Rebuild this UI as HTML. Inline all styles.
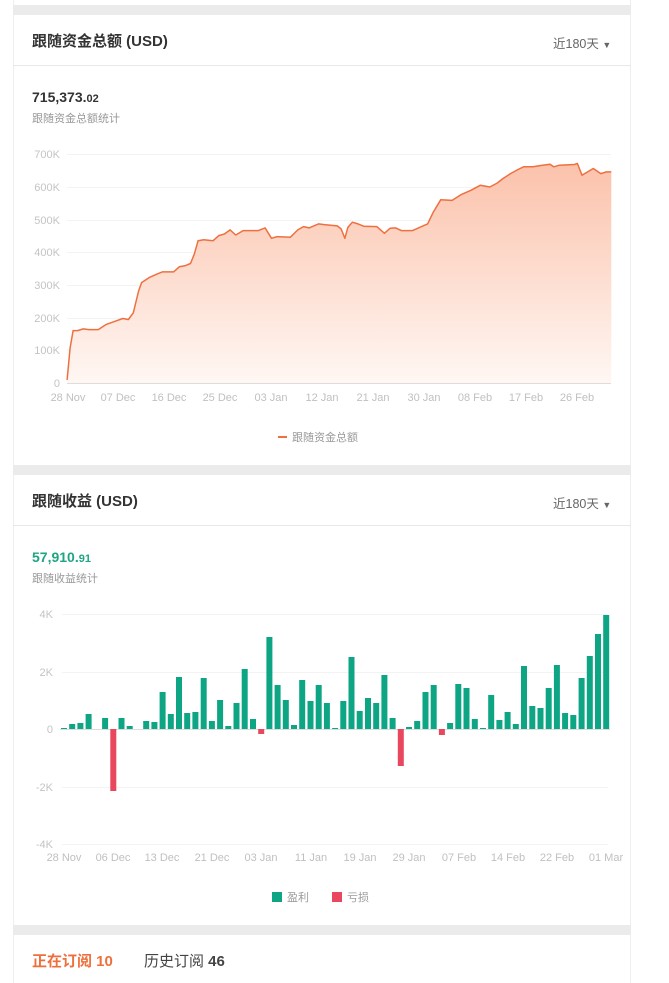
<!DOCTYPE html>
<html><head><meta charset="utf-8"><style>
*{margin:0;padding:0;box-sizing:border-box}
body{width:669px;height:983px;background:#fff;position:relative;overflow:hidden;font-family:"Liberation Sans","Noto Sans CJK SC",sans-serif}
.gap{position:absolute;left:13px;width:618px;background:#ebebeb}
.card{position:absolute;left:13px;width:618px;background:#fff;border-left:1px solid #eee;border-right:1px solid #eee}
.t{position:absolute;white-space:nowrap}
</style></head><body>
<div class="card" style="top:0;height:5px"></div>
<div class="gap" style="top:5px;height:10px"></div>
<div class="card" style="top:15px;height:450px"></div>
<div class="gap" style="top:465px;height:10px"></div>
<div class="card" style="top:475px;height:450px"></div>
<div class="gap" style="top:925px;height:10px"></div>
<div class="card" style="top:935px;height:48px"></div>

<div class="t" style="left:32px;top:30px;font-size:15px;font-weight:bold;color:#333">跟随资金总额 (USD)</div>
<div class="t" style="left:553px;top:33px;font-size:12.5px;color:#666">近180天 <span style="font-size:9px;color:#666">▼</span></div>
<div style="position:absolute;left:13px;top:65px;width:618px;height:1px;background:#e8e8e8"></div>
<div class="t" style="left:32px;top:89px;font-size:14px;font-weight:bold;color:#333">715,373.<span style="font-size:11px">02</span></div>
<div class="t" style="left:32px;top:110px;font-size:11px;color:#999">跟随资金总额统计</div>

<div class="t" style="left:32px;top:490px;font-size:15px;font-weight:bold;color:#333">跟随收益 (USD)</div>
<div class="t" style="left:553px;top:493px;font-size:12.5px;color:#666">近180天 <span style="font-size:9px;color:#666">▼</span></div>
<div style="position:absolute;left:13px;top:525px;width:618px;height:1px;background:#e8e8e8"></div>
<div class="t" style="left:32px;top:549px;font-size:14px;font-weight:bold;color:#1ea584">57,910.<span style="font-size:11px">91</span></div>
<div class="t" style="left:32px;top:570px;font-size:11px;color:#999">跟随收益统计</div>

<div class="t" style="left:32px;top:950px;font-size:15px;font-weight:bold;color:#ef6f3c">正在订阅 10</div>
<div class="t" style="left:144px;top:950px;font-size:15px;color:#444">历史订阅 <b>46</b></div>

<svg style="position:absolute;left:0;top:0" width="669" height="983" font-family="Liberation Sans, sans-serif">
<defs><linearGradient id="g" x1="0" y1="0" x2="0" y2="1"><stop offset="0" stop-color="#fbc2ab"/><stop offset="1" stop-color="#fff7f3"/></linearGradient></defs>
<g stroke="#f3f3f3" stroke-width="1">
<line x1="67" y1="154.5" x2="611" y2="154.5"/><line x1="67" y1="187.5" x2="611" y2="187.5"/><line x1="67" y1="220.5" x2="611" y2="220.5"/><line x1="67" y1="252.5" x2="611" y2="252.5"/><line x1="67" y1="285.5" x2="611" y2="285.5"/><line x1="67" y1="318.5" x2="611" y2="318.5"/><line x1="67" y1="350.5" x2="611" y2="350.5"/>
<line x1="62" y1="614.5" x2="608" y2="614.5"/><line x1="62" y1="672.5" x2="608" y2="672.5"/><line x1="62" y1="787.5" x2="608" y2="787.5"/><line x1="62" y1="844.5" x2="608" y2="844.5"/>
</g>
<g font-size="11" fill="#c4c4c4" text-anchor="end">
<text x="60" y="158">700K</text><text x="60" y="191">600K</text><text x="60" y="224">500K</text><text x="60" y="256">400K</text><text x="60" y="289">300K</text><text x="60" y="322">200K</text><text x="60" y="354">100K</text><text x="60" y="387">0</text>
<text x="53" y="618">4K</text><text x="53" y="676">2K</text><text x="53" y="733">0</text><text x="53" y="791">-2K</text><text x="53" y="848">-4K</text>
</g>
<path d="M67.1,379.9 L70.1,348 L73.1,330.6 L77.6,330.6 L83.3,328.9 L88.9,329.6 L98.3,329.6 L105.9,324.6 L115.3,321.2 L122.8,318.5 L128.4,319.5 L133.3,312.8 L138.6,291 L141.6,282.6 L149.1,277.6 L156.7,274.2 L162.3,271.9 L173.6,271.9 L179.3,266.8 L184.9,265.8 L190.5,263.5 L194.3,254.1 L198.1,240.7 L203.7,239.7 L213.1,240.7 L218.8,235.6 L224.4,234 L230.1,229.9 L235.7,235 L243.2,230.6 L258.3,230.6 L265.1,227.9 L271.5,238.3 L277.1,236.6 L290.3,237.3 L297.8,229.9 L303.5,226.6 L309.1,227.9 L318.5,223.9 L324.2,224.6 L337.3,225.9 L341.1,228.9 L344.9,238.3 L347.9,227.2 L352.4,222.2 L358,223.9 L363.7,226.2 L376.8,226.6 L384.4,233.3 L390,228.3 L395.7,227.9 L401.3,230.6 L412.6,230.6 L420.1,227.2 L427.6,223.9 L433.3,212.1 L440.8,199.7 L452.1,200.4 L461.5,194.4 L470.9,190.3 L480.3,185.3 L489.8,187 L497.3,183 L502.9,178.6 L510.5,173.6 L518,169.5 L523.6,166.8 L533,166.8 L542.4,165.2 L550,164.2 L553.7,166.8 L559.4,165.2 L574.4,164.5 L577.4,163.5 L582,175.2 L587.6,171.9 L593.3,168.5 L600.8,173.6 L606.4,171.9 L611.3,171.9 L611.3,383 L67,383 Z" fill="url(#g)"/>
<path d="M67.1,379.9 L70.1,348 L73.1,330.6 L77.6,330.6 L83.3,328.9 L88.9,329.6 L98.3,329.6 L105.9,324.6 L115.3,321.2 L122.8,318.5 L128.4,319.5 L133.3,312.8 L138.6,291 L141.6,282.6 L149.1,277.6 L156.7,274.2 L162.3,271.9 L173.6,271.9 L179.3,266.8 L184.9,265.8 L190.5,263.5 L194.3,254.1 L198.1,240.7 L203.7,239.7 L213.1,240.7 L218.8,235.6 L224.4,234 L230.1,229.9 L235.7,235 L243.2,230.6 L258.3,230.6 L265.1,227.9 L271.5,238.3 L277.1,236.6 L290.3,237.3 L297.8,229.9 L303.5,226.6 L309.1,227.9 L318.5,223.9 L324.2,224.6 L337.3,225.9 L341.1,228.9 L344.9,238.3 L347.9,227.2 L352.4,222.2 L358,223.9 L363.7,226.2 L376.8,226.6 L384.4,233.3 L390,228.3 L395.7,227.9 L401.3,230.6 L412.6,230.6 L420.1,227.2 L427.6,223.9 L433.3,212.1 L440.8,199.7 L452.1,200.4 L461.5,194.4 L470.9,190.3 L480.3,185.3 L489.8,187 L497.3,183 L502.9,178.6 L510.5,173.6 L518,169.5 L523.6,166.8 L533,166.8 L542.4,165.2 L550,164.2 L553.7,166.8 L559.4,165.2 L574.4,164.5 L577.4,163.5 L582,175.2 L587.6,171.9 L593.3,168.5 L600.8,173.6 L606.4,171.9 L611.3,171.9" fill="none" stroke="#ee7040" stroke-width="1.5" stroke-linejoin="round"/>
<line x1="67" y1="383.5" x2="611" y2="383.5" stroke="#ddd"/>
<g font-size="11" fill="#c0c0c0" text-anchor="middle">
<text x="68" y="401">28 Nov</text><text x="118" y="401">07 Dec</text><text x="169" y="401">16 Dec</text><text x="220" y="401">25 Dec</text><text x="271" y="401">03 Jan</text><text x="322" y="401">12 Jan</text><text x="373" y="401">21 Jan</text><text x="424" y="401">30 Jan</text><text x="475" y="401">08 Feb</text><text x="526" y="401">17 Feb</text><text x="577" y="401">26 Feb</text>
<text x="64" y="861">28 Nov</text><text x="113" y="861">06 Dec</text><text x="162" y="861">13 Dec</text><text x="212" y="861">21 Dec</text><text x="261" y="861">03 Jan</text><text x="311" y="861">11 Jan</text><text x="360" y="861">19 Jan</text><text x="409" y="861">29 Jan</text><text x="459" y="861">07 Feb</text><text x="508" y="861">14 Feb</text><text x="557" y="861">22 Feb</text><text x="606" y="861">01 Mar</text>
</g>
<rect x="278" y="436" width="9" height="2" fill="#ee7040"/>
<text x="292" y="441" font-size="11" fill="#999" font-family="Liberation Sans, Noto Sans CJK SC, sans-serif">跟随资金总额</text>
<line x1="60" y1="729.5" x2="610" y2="729.5" stroke="#ddd"/>
<g fill="#0ea584">
<rect x="61" y="728" width="6" height="1"/><rect x="69.2" y="724" width="6" height="5"/><rect x="77.4" y="723" width="6" height="6"/><rect x="85.6" y="714" width="6" height="15"/><rect x="102.1" y="718" width="6" height="11"/><rect x="118.5" y="718" width="6" height="11"/><rect x="126.7" y="726" width="6" height="3"/><rect x="143.2" y="721" width="6" height="8"/><rect x="151.4" y="722" width="6" height="7"/><rect x="159.6" y="692" width="6" height="37"/><rect x="167.8" y="714" width="6" height="15"/><rect x="176" y="677" width="6" height="52"/><rect x="184.2" y="713" width="6" height="16"/><rect x="192.4" y="712" width="6" height="17"/><rect x="200.7" y="678" width="6" height="51"/><rect x="208.9" y="721" width="6" height="8"/><rect x="217.1" y="700" width="6" height="29"/><rect x="225.3" y="726" width="6" height="3"/><rect x="233.5" y="703" width="6" height="26"/><rect x="241.7" y="669" width="6" height="60"/><rect x="250" y="719" width="6" height="10"/><rect x="266.4" y="637" width="6" height="92"/><rect x="274.6" y="685" width="6" height="44"/><rect x="282.8" y="700" width="6" height="29"/><rect x="291" y="725" width="6" height="4"/><rect x="299.2" y="680" width="6" height="49"/><rect x="307.5" y="701" width="6" height="28"/><rect x="315.7" y="685" width="6" height="44"/><rect x="323.9" y="703" width="6" height="26"/><rect x="332.1" y="728" width="6" height="1"/><rect x="340.3" y="701" width="6" height="28"/><rect x="348.5" y="657" width="6" height="72"/><rect x="356.7" y="711" width="6" height="18"/><rect x="365" y="698" width="6" height="31"/><rect x="373.2" y="703" width="6" height="26"/><rect x="381.4" y="675" width="6" height="54"/><rect x="389.6" y="718" width="6" height="11"/><rect x="406" y="727" width="6" height="2"/><rect x="414.2" y="721" width="6" height="8"/><rect x="422.5" y="692" width="6" height="37"/><rect x="430.7" y="685" width="6" height="44"/><rect x="447.1" y="723" width="6" height="6"/><rect x="455.3" y="684" width="6" height="45"/><rect x="463.5" y="688" width="6" height="41"/><rect x="471.8" y="719" width="6" height="10"/><rect x="480" y="728" width="6" height="1"/><rect x="488.2" y="695" width="6" height="34"/><rect x="496.4" y="720" width="6" height="9"/><rect x="504.6" y="712" width="6" height="17"/><rect x="512.8" y="724" width="6" height="5"/><rect x="521" y="666" width="6" height="63"/><rect x="529.3" y="706" width="6" height="23"/><rect x="537.5" y="708" width="6" height="21"/><rect x="545.7" y="688" width="6" height="41"/><rect x="553.9" y="665" width="6" height="64"/><rect x="562.1" y="713" width="6" height="16"/><rect x="570.3" y="715" width="6" height="14"/><rect x="578.6" y="678" width="6" height="51"/><rect x="586.8" y="656" width="6" height="73"/><rect x="595" y="634" width="6" height="95"/><rect x="603.2" y="615" width="6" height="114"/>
</g>
<g fill="#e8475e">
<rect x="110.3" y="729" width="6" height="62"/><rect x="258.2" y="729" width="6" height="5"/><rect x="397.8" y="729" width="6" height="37"/><rect x="438.9" y="729" width="6" height="6"/>
</g>
<rect x="272" y="892" width="10" height="10" fill="#0ea584"/>
<text x="287" y="901" font-size="11" fill="#999" font-family="Liberation Sans, Noto Sans CJK SC, sans-serif">盈利</text>
<rect x="332" y="892" width="10" height="10" fill="#e8475e"/>
<text x="347" y="901" font-size="11" fill="#999" font-family="Liberation Sans, Noto Sans CJK SC, sans-serif">亏损</text>
</svg>
</body></html>
